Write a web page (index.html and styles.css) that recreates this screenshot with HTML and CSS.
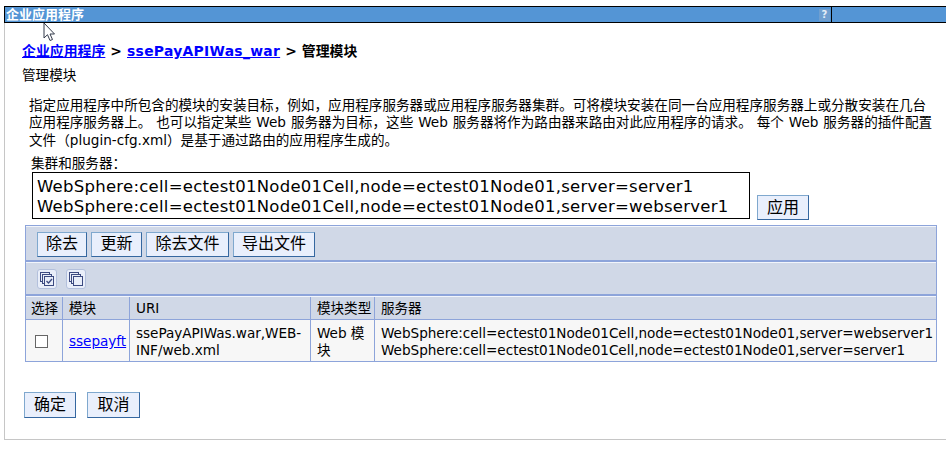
FILE: index.html
```html
<!DOCTYPE html>
<html lang="zh-CN">
<head>
<meta charset="utf-8">
<title>企业应用程序</title>
<link rel="stylesheet" href="styles.css">
</head>
<body>
<div class="portlet">
  <header class="titlebar">
    <div class="titlebar-main"><span class="heading">企业应用程序</span><span class="help">?</span></div>
    <div class="titlebar-side"></div>
  </header>
  <main class="content">
    <nav class="crumbs"><a href="#">企业应用程序</a><span class="sep">&gt;</span><a class="app" href="#">ssePayAPIWas_war</a><span class="sep">&gt;</span><span>管理模块</span></nav>
    <h1 class="page-title">管理模块</h1>
    <div class="description">
      <div>指定应用程序中所包含的模块的安装目标，例如，应用程序服务器或应用程序服务器集群。可将模块安装在同一台应用程序服务器上或分散安装在几台</div>
      <div>应用程序服务器上。 也可以指定某些 Web 服务器为目标，这些 Web 服务器将作为路由器来路由对此应用程序的请求。 每个 Web 服务器的插件配置</div>
      <div>文件（plugin-cfg.xml）是基于通过路由的应用程序生成的。</div>
    </div>
    <div class="label">集群和服务器：</div>
    <div class="target-row">
      <div class="listbox">
        <div>WebSphere:cell=ectest01Node01Cell,node=ectest01Node01,server=server1</div>
        <div>WebSphere:cell=ectest01Node01Cell,node=ectest01Node01,server=webserver1</div>
      </div>
      <button class="btn apply">应用</button>
    </div>
    <section class="table">
      <div class="toolbar">
        <button class="btn w50">除去</button>
        <button class="btn w51">更新</button>
        <button class="btn w83">除去文件</button>
        <button class="btn w82">导出文件</button>
      </div>
      <div class="selectbar">
        <span class="icon"><svg width="16" height="16" viewBox="0 0 16 16" fill="#e9eef9" stroke="#3c4a80"><rect x="1.500" y="1.500" width="9" height="9"/><rect x="3.500" y="3.500" width="9" height="9"/><rect x="5.500" y="5.500" width="9" height="9"/><path d="M7.500 10l2 2 3.500-4" fill="none" stroke-width="1.300"/></svg></span>
        <span class="icon"><svg width="16" height="16" viewBox="0 0 16 16" fill="#e9eef9" stroke="#3c4a80"><rect x="1.500" y="1.500" width="9" height="9"/><rect x="3.500" y="3.500" width="9" height="9"/><rect x="5.500" y="5.500" width="9" height="9"/></svg></span>
      </div>
      <div class="row head">
        <div>选择</div><div>模块</div><div>URI</div><div>模块类型</div><div>服务器</div>
      </div>
      <div class="row body">
        <div><span class="checkbox"></span></div>
        <div><a href="#">ssepayft</a></div>
        <div>ssePayAPIWas.war,WEB-<br>INF/web.xml</div>
        <div>Web 模<br>块</div>
        <div>WebSphere:cell=ectest01Node01Cell,node=ectest01Node01,server=webserver1<br>WebSphere:cell=ectest01Node01Cell,node=ectest01Node01,server=server1</div>
      </div>
    </section>
    <footer class="actions">
      <button class="btn ok">确定</button>
      <button class="btn cancel">取消</button>
    </footer>
  </main>
  <svg class="pointer" width="13" height="20" viewBox="0 0 13 20"><path d="M1 1v15l3.500-3.300L7 18.500l2.500-1L7 12h4.500z" fill="#fff" stroke="#333a4a"/></svg>
</div>
</body>
</html>
```
FILE: styles.css
```css
* { box-sizing: border-box; }
body {
  margin: 0;
  background: #fff;
  color: #000;
  font: 13.6px/17px "DejaVu Sans", "Noto Sans CJK SC", sans-serif;
  white-space: nowrap;
  overflow: hidden;
}
a { color: #00f; }
.portlet {
  position: relative;
  margin: 6px 0 0 4px;
  height: 434px;
  border-left: 1px solid #c6c6c6;
  border-bottom: 1px solid #c6c6c6;
}
.titlebar {
  display: flex;
  height: 17px;
  margin-left: -1px;
  border: 1px solid #000;
  border-right: 0;
  background: #5495d5;
}
.titlebar-main {
  display: flex;
  justify-content: space-between;
  align-items: center;
  width: 827px;
  padding: 0 1px 0 1px;
  border-right: 1px solid #000;
}
.heading { color: #fff; font-size: 13px; line-height: 15px; font-weight: bold; }
.help {
  width: 11px;
  height: 12px;
  background: #6f9fd0;
  color: #e4edf7;
  font-size: 10px;
  line-height: 12px;
  font-weight: bold;
  text-align: center;
}
.content { padding: 19px 9px 0 17px; }
.crumbs { display: flex; font-size: 13.900px; font-weight: bold; line-height: 18px; height: 18px; }
.sep { margin: 0 5px; }
.app { letter-spacing: 0.3px; }
.page-title { margin: 7px 0 0; font-size: 13.6px; font-weight: normal; line-height: 17px; }
.description { margin: 13px 0 0 7px; line-height: 17.400px; word-spacing: 0.6px; }
.label { margin: 6px 0 0 9px; height: 16px; line-height: 16px; }
.target-row { display: flex; align-items: flex-end; gap: 7px; margin: 1px 0 0 10px; height: 48px; }
.listbox {
  width: 718px;
  height: 47px;
  margin-bottom: 1px;
  padding: 4px 4px 0;
  border: 1px solid #000;
  font-size: 16.500px;
  line-height: 20px;
  letter-spacing: 0.26px;
}
.btn {
  height: 25px;
  padding: 0;
  border: 1px solid;
  border-color: #7fa8ce #3567a0 #3567a0 #7fa8ce;
  background: #e9effc;
  color: #000;
  font: 16px/21px "DejaVu Sans", "Noto Sans CJK SC", sans-serif;
}
.apply { width: 52px; }
.w50 { width: 50px; }
.w51 { width: 51px; }
.w83 { width: 83px; }
.w82 { width: 82px; }
.toolbar .btn { padding-bottom: 2px; }
.table { width: 912px; margin: 5px 0 0 3px; border: 1px solid #8da4da; background: #d0d8e7; }
.toolbar {
  display: flex;
  gap: 4px;
  height: 36px;
  padding: 5px 0 0 11px;
  border-top: 1px solid #f2f5fb;
  border-bottom: 2px solid #8da4da;
}
.selectbar {
  display: flex;
  gap: 9px;
  height: 34px;
  padding: 6px 0 0 11px;
  border-top: 1px solid #f2f5fb;
  border-bottom: 2px solid #8da4da;
}
.icon {
  width: 20px;
  height: 20px;
  padding: 1px;
  border: 1px solid #b3c0dc;
  border-radius: 3px;
  background: #e9eef9;
}
.icon svg { display: block; }
.row { display: grid; grid-template-columns: 36px 67px 181px 64px 1fr; }
.row > div { display: flex; align-items: center; padding-left: 6px; border-left: 1px solid #8da4da; }
.row > div:first-child { border-left: 0; padding-left: 5px; }
.head { height: 24px; border-bottom: 1px solid #8da4da; border-top: 1px solid #f2f5fb; }
.row > div { letter-spacing: -0.035px; }
.body { height: 41px; background: #f7f7f7; }
.body > div { padding-top: 2px; }
.checkbox { width: 13px; height: 13px; margin-left: 4px; border: 1px solid #666; background: #fff; }
.actions { display: flex; gap: 11px; margin: 30px 0 0 2px; }
.actions .btn { height: 26px; padding-bottom: 2px; }
.ok { width: 52px; }
.cancel { width: 53px; }
.pointer { position: absolute; left: 38px; top: 16px; }
```
